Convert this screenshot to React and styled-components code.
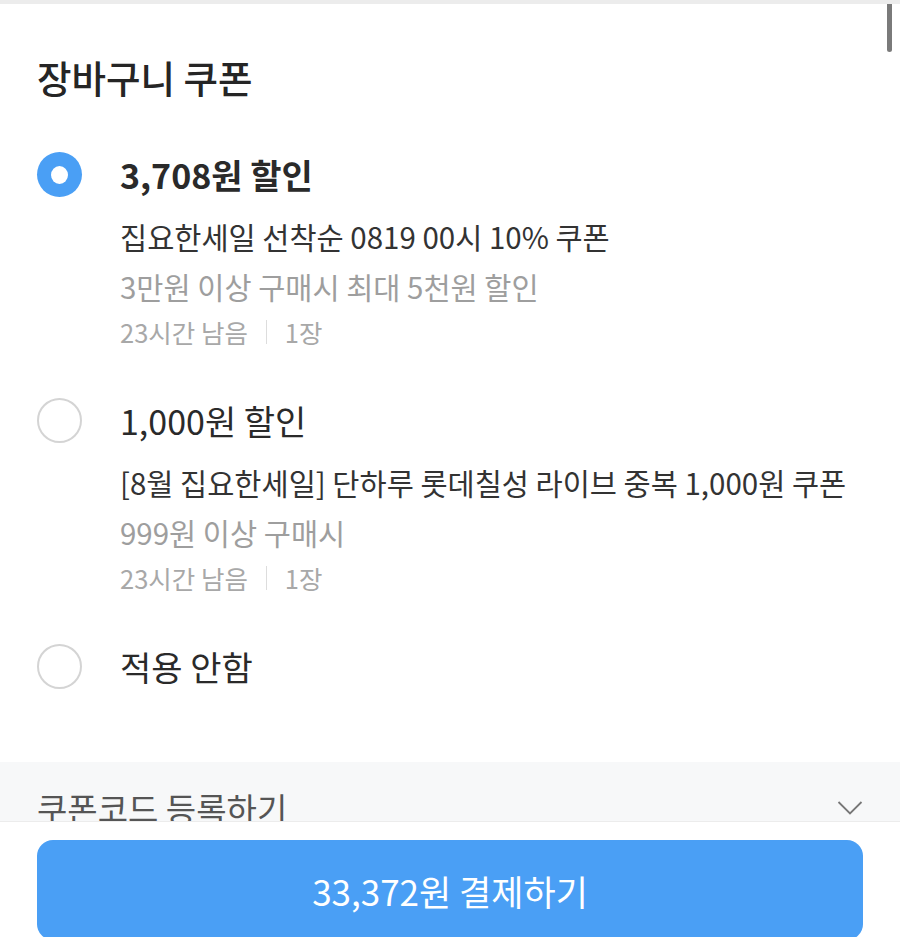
import React from "react";
import styled, { createGlobalStyle } from "styled-components";

const GlobalStyle = createGlobalStyle`
  html, body {
    margin: 0;
    padding: 0;
    height: 100%;
    overflow: hidden;
    background: #ffffff;
  }
  body {
    font-family: "Noto Sans CJK KR", "Noto Sans", sans-serif;
    color: #222;
  }
`;

const Page = styled.div`
  position: relative;
  height: 937px;
  display: flex;
  flex-direction: column;
  overflow: hidden;
  border-top: 4px solid #ececec;
  box-sizing: border-box;
`;

const Scrollbar = styled.div`
  position: absolute;
  top: 0;
  right: 8px;
  width: 5px;
  height: 48px;
  border-radius: 0 0 3px 3px;
  background: #7a7a7a;
`;

const Content = styled.div`
  flex: 1;
  overflow: hidden;
`;

const Heading = styled.h1`
  margin: 0;
  padding: 47px 37px 0;
  font-size: 37.5px;
  font-weight: 500;
  line-height: 52px;
  color: #252525;
`;

const List = styled.ul`
  list-style: none;
  margin: 0;
  padding: 49px 37px 0;
  display: flex;
  flex-direction: column;
  gap: 45px;
`;

const Item = styled.li`
  display: flex;
  align-items: flex-start;
  gap: 38px;
`;

const Radio = styled.span`
  flex: none;
  width: 45px;
  height: 45px;
  border-radius: 50%;
  box-sizing: border-box;
  display: flex;
  align-items: center;
  justify-content: center;
  background: ${(p) => (p.$checked ? "#4a9ff5" : "#fff")};
  border: ${(p) => (p.$checked ? "none" : "2px solid #d4d4d4")};

  &::after {
    content: "";
    display: ${(p) => (p.$checked ? "block" : "none")};
    width: 17px;
    height: 18px;
    border-radius: 50%;
    background: #fff;
  }
`;

const Body = styled.div`
  display: flex;
  flex-direction: column;
`;

const Title = styled.div`
  font-size: 34px;
  line-height: 45px;
  font-weight: ${(p) => (p.$bold ? 700 : 400)};
  color: #2a2a2a;
`;

const Desc = styled.div`
  margin-top: 14px;
  font-size: 29.5px;
  line-height: 50px;
  color: #333;
`;

const Condition = styled.div`
  font-size: 29.5px;
  line-height: 50px;
  color: #9e9e9e;
`;

const Meta = styled.div`
  display: flex;
  align-items: center;
  font-size: 25.5px;
  line-height: 42px;
  color: #a8a8a8;
`;

const Divider = styled.span`
  width: 1px;
  height: 24px;
  margin: 0 18px;
  background: #dddddd;
`;

const CodeSection = styled.div`
  margin-top: 73px;
  background: #f7f8f9;
  padding: 21px 37px 0 37px;
  height: 120px;
  box-sizing: border-box;
`;

const CodeRow = styled.div`
  display: flex;
  align-items: center;
  justify-content: space-between;
  height: 50px;
`;

const CodeLabel = styled.span`
  font-size: 33px;
  color: #555;
`;

const Footer = styled.div`
  flex: none;
  height: 116px;
  box-sizing: border-box;
  border-top: 1px solid #ececec;
  background: #fff;
  padding: 18px 37px 0 37px;
  overflow: hidden;
`;

const PayButton = styled.button`
  width: 100%;
  height: 100px;
  border: none;
  border-radius: 16px;
  background: #4a9ff5;
  color: #fff;
  font-family: "Noto Sans CJK KR", "Noto Sans", sans-serif;
  font-size: 35px;
  font-weight: 400;
  display: flex;
  align-items: center;
  justify-content: center;
`;

const Chevron = () => (
  <svg width="26" height="16" viewBox="0 0 26 16" fill="none">
    <path d="M1.5 2 L13 13.5 L24.5 2" stroke="#777" strokeWidth="1.8" />
  </svg>
);

const coupons = [
  {
    id: 1,
    amount: "3,708원 할인",
    name: "집요한세일 선착순 0819 00시 10% 쿠폰",
    condition: "3만원 이상 구매시 최대 5천원 할인",
    left: "23시간 남음",
    count: "1장",
  },
  {
    id: 2,
    amount: "1,000원 할인",
    name: "[8월 집요한세일] 단하루 롯데칠성 라이브 중복 1,000원 쿠폰",
    condition: "999원 이상 구매시",
    left: "23시간 남음",
    count: "1장",
  },
];

const App = () => {
  const selected = 1;
  return (
    <>
      <GlobalStyle />
      <Page>
        <Scrollbar />
        <Content>
          <Heading>장바구니 쿠폰</Heading>
          <List>
            {coupons.map((c) => (
              <Item key={c.id}>
                <Radio $checked={selected === c.id} />
                <Body>
                  <Title $bold={selected === c.id}>{c.amount}</Title>
                  <Desc>{c.name}</Desc>
                  <Condition>{c.condition}</Condition>
                  <Meta>
                    {c.left}
                    <Divider />
                    {c.count}
                  </Meta>
                </Body>
              </Item>
            ))}
            <Item>
              <Radio $checked={selected === 0} />
              <Body>
                <Title>적용 안함</Title>
              </Body>
            </Item>
          </List>
          <CodeSection>
            <CodeRow>
              <CodeLabel>쿠폰코드 등록하기</CodeLabel>
              <Chevron />
            </CodeRow>
          </CodeSection>
        </Content>
        <Footer>
          <PayButton>33,372원 결제하기</PayButton>
        </Footer>
      </Page>
    </>
  );
};

export default App;
